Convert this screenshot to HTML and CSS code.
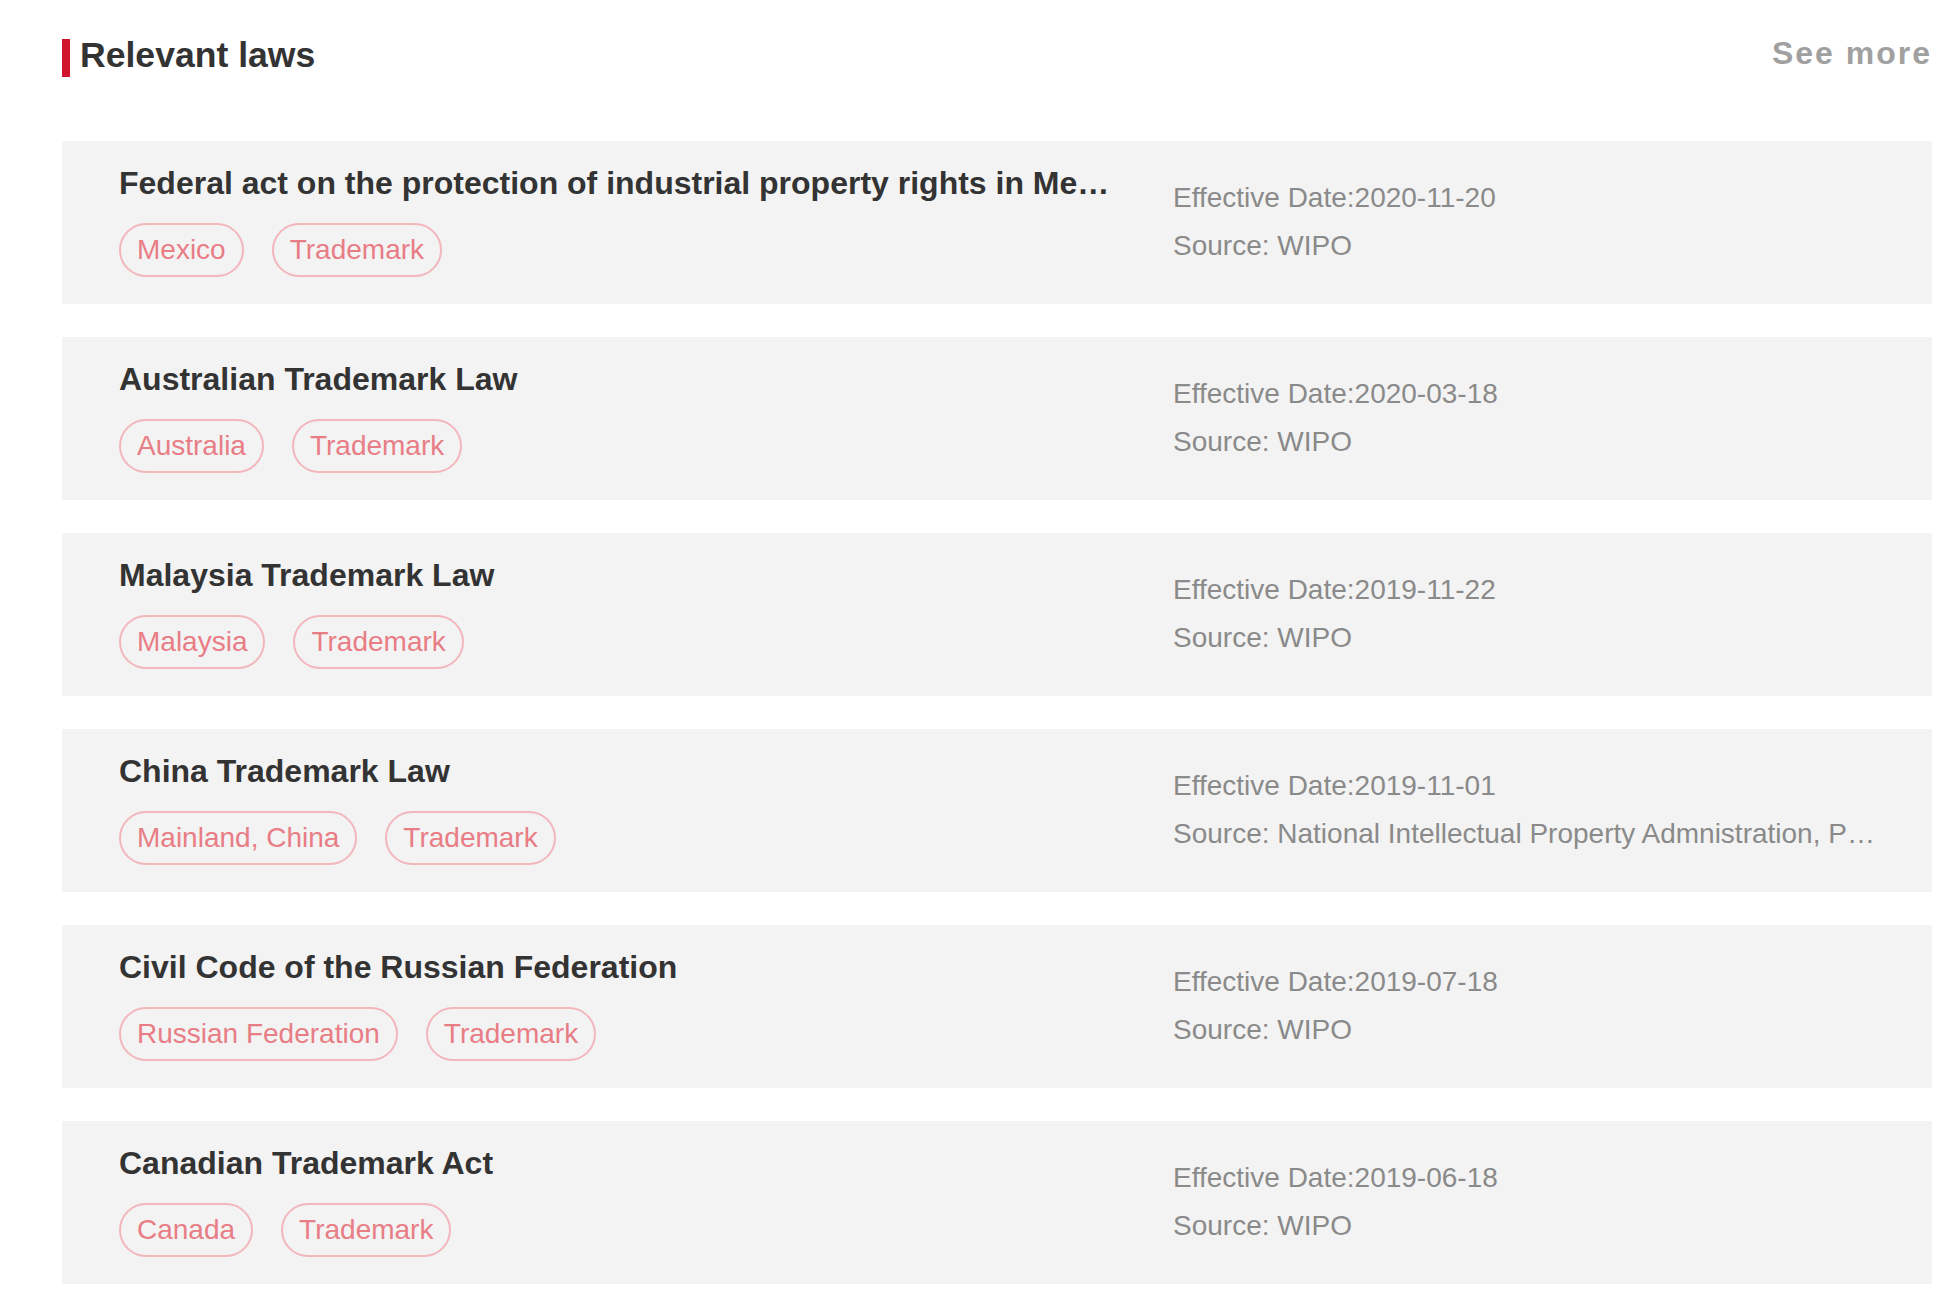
FILE: index.html
```html
<!DOCTYPE html>
<html lang="en">
<head>
<meta charset="utf-8">
<title>Relevant laws</title>
<link rel="stylesheet" href="styles.css">
</head>
<body>
<div class="page">
  <header class="section-head">
    <div class="head-left">
      <span class="head-bar"></span>
      <h2 class="head-title">Relevant laws</h2>
    </div>
    <a class="see-more" href="#">See more</a>
  </header>

  <ul class="law-list">
    <li class="law-card">
      <div class="law-main">
        <h3 class="law-title">Federal act on the protection of industrial property rights in Mexico</h3>
        <div class="law-tags"><span class="tag">Mexico</span><span class="tag">Trademark</span></div>
      </div>
      <div class="law-meta">
        <p class="meta-line">Effective Date:2020-11-20</p>
        <p class="meta-line">Source: WIPO</p>
      </div>
    </li>
    <li class="law-card">
      <div class="law-main">
        <h3 class="law-title">Australian Trademark Law</h3>
        <div class="law-tags"><span class="tag">Australia</span><span class="tag">Trademark</span></div>
      </div>
      <div class="law-meta">
        <p class="meta-line">Effective Date:2020-03-18</p>
        <p class="meta-line">Source: WIPO</p>
      </div>
    </li>
    <li class="law-card">
      <div class="law-main">
        <h3 class="law-title">Malaysia Trademark Law</h3>
        <div class="law-tags"><span class="tag">Malaysia</span><span class="tag">Trademark</span></div>
      </div>
      <div class="law-meta">
        <p class="meta-line">Effective Date:2019-11-22</p>
        <p class="meta-line">Source: WIPO</p>
      </div>
    </li>
    <li class="law-card">
      <div class="law-main">
        <h3 class="law-title">China Trademark Law</h3>
        <div class="law-tags"><span class="tag">Mainland, China</span><span class="tag">Trademark</span></div>
      </div>
      <div class="law-meta">
        <p class="meta-line">Effective Date:2019-11-01</p>
        <p class="meta-line">Source: National Intellectual Property Admnistration, PRC</p>
      </div>
    </li>
    <li class="law-card">
      <div class="law-main">
        <h3 class="law-title">Civil Code of the Russian Federation</h3>
        <div class="law-tags"><span class="tag">Russian Federation</span><span class="tag">Trademark</span></div>
      </div>
      <div class="law-meta">
        <p class="meta-line">Effective Date:2019-07-18</p>
        <p class="meta-line">Source: WIPO</p>
      </div>
    </li>
    <li class="law-card">
      <div class="law-main">
        <h3 class="law-title">Canadian Trademark Act</h3>
        <div class="law-tags"><span class="tag">Canada</span><span class="tag">Trademark</span></div>
      </div>
      <div class="law-meta">
        <p class="meta-line">Effective Date:2019-06-18</p>
        <p class="meta-line">Source: WIPO</p>
      </div>
    </li>
  </ul>
</div>
</body>
</html>
```

FILE: styles.css
```css
* {
  box-sizing: border-box;
}

html, body {
  margin: 0;
  padding: 0;
  background: #ffffff;
}

body {
  font-family: "Liberation Sans", Arial, Helvetica, sans-serif;
  color: #333333;
}

.page {
  padding: 37px 28px 0 62px;
}

/* Header */
.section-head {
  display: flex;
  justify-content: space-between;
  align-items: flex-start;
  height: 40px;
}

.head-left {
  display: flex;
  align-items: flex-start;
}

.head-bar {
  display: block;
  width: 8px;
  height: 38px;
  margin-top: 2px;
  background: #d2132c;
}

.head-title {
  margin: 2px 0 0 10px;
  font-size: 35.6px;
  line-height: 32px;
  font-weight: 700;
  color: #333333;
}

.see-more {
  font-size: 32px;
  line-height: 32px;
  font-weight: 700;
  letter-spacing: 2px;
  color: #a0a0a0;
  text-decoration: none;
  margin-right: 0;
}

/* List */
.law-list {
  list-style: none;
  margin: 64px 0 0 0;
  padding: 0;
  display: flex;
  flex-direction: column;
  gap: 33px;
}

.law-card {
  display: flex;
  align-items: flex-start;
  gap: 56px;
  height: 163px;
  padding: 22px 57px 0 57px;
  background: #f3f3f3;
}

.law-main {
  width: 998px;
  flex: 0 0 998px;
  min-width: 0;
}

.law-title {
  margin: 0;
  font-size: 32px;
  line-height: 40px;
  font-weight: 700;
  color: #333333;
  white-space: nowrap;
  overflow: hidden;
  text-overflow: ellipsis;
}

.law-tags {
  display: flex;
  gap: 28px;
  margin-top: 20px;
}

.tag {
  display: inline-block;
  height: 54px;
  padding: 0 16px;
  border: 2px solid #f2b6bc;
  border-radius: 27px;
  font-size: 28px;
  line-height: 50px;
  color: #e97d85;
  white-space: nowrap;
}

.law-meta {
  flex: 1 1 auto;
  min-width: 0;
  align-self: center;
  margin-top: -24px;
}

.meta-line {
  margin: 0;
  font-size: 28px;
  line-height: 48px;
  color: #8a8a8a;
  white-space: nowrap;
  overflow: hidden;
  text-overflow: ellipsis;
}
```
